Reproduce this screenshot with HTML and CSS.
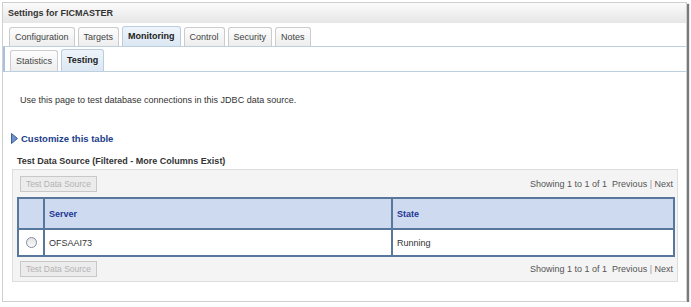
FILE: index.html
```html
<!DOCTYPE html>
<html lang="en">
<head>
    <meta charset="UTF-8">
    <title>Settings for FICMASTER</title>
    <link rel="stylesheet" href="styles.css">
</head>
<body>
    <div class="panel">
        <div class="panel-title">Settings for FICMASTER</div>

        <div class="tabs">
            <span class="tab">Configuration</span>
            <span class="tab">Targets</span>
            <span class="tab active">Monitoring</span>
            <span class="tab">Control</span>
            <span class="tab">Security</span>
            <span class="tab">Notes</span>
        </div>

        <div class="subtabs">
            <span class="tab">Statistics</span>
            <span class="tab active">Testing</span>
        </div>

        <div class="content">
            <p class="intro">Use this page to test database connections in this JDBC data source.</p>

            <a class="customize" href="#">
                <svg width="7" height="11" viewBox="0 0 7 11">
                    <path d="M0.5 0.5 L6.5 5.5 L0.5 10.5 Z" fill="#6f93c8" stroke="#3d5f99" stroke-width="1"/>
                </svg>
                Customize this table
            </a>

            <div class="table-title">Test Data Source (Filtered - More Columns Exist)</div>

            <div class="table-box">
                <div class="table-bar">
                    <button class="btn" disabled>Test Data Source</button>
                    <span class="pager">Showing 1 to 1 of 1 &nbsp;Previous <span class="sep">|</span> Next</span>
                </div>

                <table class="data">
                    <thead>
                        <tr>
                            <th class="col-select"></th>
                            <th class="col-server">Server</th>
                            <th>State</th>
                        </tr>
                    </thead>
                    <tbody>
                        <tr>
                            <td class="col-select"><span class="radio"></span></td>
                            <td>OFSAAI73</td>
                            <td>Running</td>
                        </tr>
                    </tbody>
                </table>

                <div class="table-bar">
                    <button class="btn" disabled>Test Data Source</button>
                    <span class="pager">Showing 1 to 1 of 1 &nbsp;Previous <span class="sep">|</span> Next</span>
                </div>
            </div>
        </div>
    </div>
</body>
</html>
```

FILE: styles.css
```css
body {
    margin: 0;
    background: #fff;
    font-family: 'Liberation Sans', Arial, sans-serif;
    font-size: 9px;
    color: #333;
}

.panel {
    margin: 2px 0 0 2px;
    width: 685px;
    height: 300px;
    border: 1px solid #cfcfcf;
    box-shadow: 2px 2px 1px #7a7a7a;
    box-sizing: border-box;
    background: #fff;
}

.panel-title {
    height: 20px;
    line-height: 20px;
    padding-left: 5px;
    font-weight: bold;
    color: #333;
    background: linear-gradient(#fbfbfb, #e6e6e6);
}

/* tab rows */
.tabs,
.subtabs {
    display: flex;
    align-items: flex-end;
    gap: 3px;
    border-bottom: 1px solid #bcd0e0;
}

.tabs {
    padding: 3px 0 0 6px;
    height: 20px;
}

.subtabs {
    padding: 3px 0 0 5px;
    height: 21px;
    border-left: 2px solid #a9c1dc;
}

.tab {
    height: 19px;
    line-height: 19px;
    padding: 0 5px;
    border: 1px solid #cccccc;
    border-bottom: none;
    border-radius: 3px 3px 0 0;
    background: linear-gradient(#fdfdfd, #ededed);
    color: #444;
    box-sizing: border-box;
}

.subtabs .tab {
    height: 21px;
    line-height: 21px;
}

.tab.active {
    font-weight: bold;
    color: #222;
    border-color: #b9cde0;
    background: linear-gradient(#eef4fa, #dbe7f3);
    height: 20px;
}

.subtabs .tab.active {
    height: 22px;
}

.content {
    padding: 0 8px 0 9px;
}

.intro {
    margin: 22px 0 0 8px;
    line-height: 12px;
}

.customize {
    display: flex;
    align-items: center;
    gap: 3px;
    margin: 27px 0 0 -1px;
    font-size: 9.5px;
    font-weight: bold;
    color: #1b3e8a;
    text-decoration: none;
}

.table-title {
    margin: 11px 0 0 5px;
    font-weight: bold;
    color: #333;
    line-height: 12px;
}

.table-box {
    margin: 2px 0 0 0;
    padding: 5px 2px 5px 4px;
    height: 113px;
    box-sizing: border-box;
    background: #f4f4f4;
    border: 1px solid #dddddd;
}

.table-bar {
    display: flex;
    justify-content: space-between;
    align-items: center;
    padding-left: 3px;
    padding-right: 2px;
    height: 17px;
}

.btn {
    height: 16px;
    width: 77px;
    padding: 0;
    border: 1px solid #c8c8c8;
    background: #ececec;
    color: #b3b3b3;
    font-family: inherit;
    font-size: 8.5px;
}

.pager {
    color: #555;
}

.sep {
    color: #999;
}

.data {
    width: 100%;
    margin: 5px 0 3px 0;
    border-collapse: collapse;
    border: 2px solid #58779c;
    background: #fff;
}

.data th {
    height: 29px;
    padding: 0 0 0 4px;
    text-align: left;
    font-weight: bold;
    color: #1f3795;
    background: #cddaef;
    border-right: 2px solid #58779c;
    border-bottom: 2px solid #58779c;
}

.data td {
    height: 25px;
    padding: 0 0 0 4px;
    color: #333;
    border-right: 2px solid #58779c;
}

.data .col-select {
    width: 24px;
    padding: 0;
    text-align: center;
}

.data .col-server {
    width: 342px;
}

.radio {
    display: inline-block;
    width: 9px;
    height: 9px;
    border: 1px solid #7f8fa3;
    border-radius: 50%;
    background: linear-gradient(#e4e4e4, #fafafa);
    vertical-align: middle;
}
```
